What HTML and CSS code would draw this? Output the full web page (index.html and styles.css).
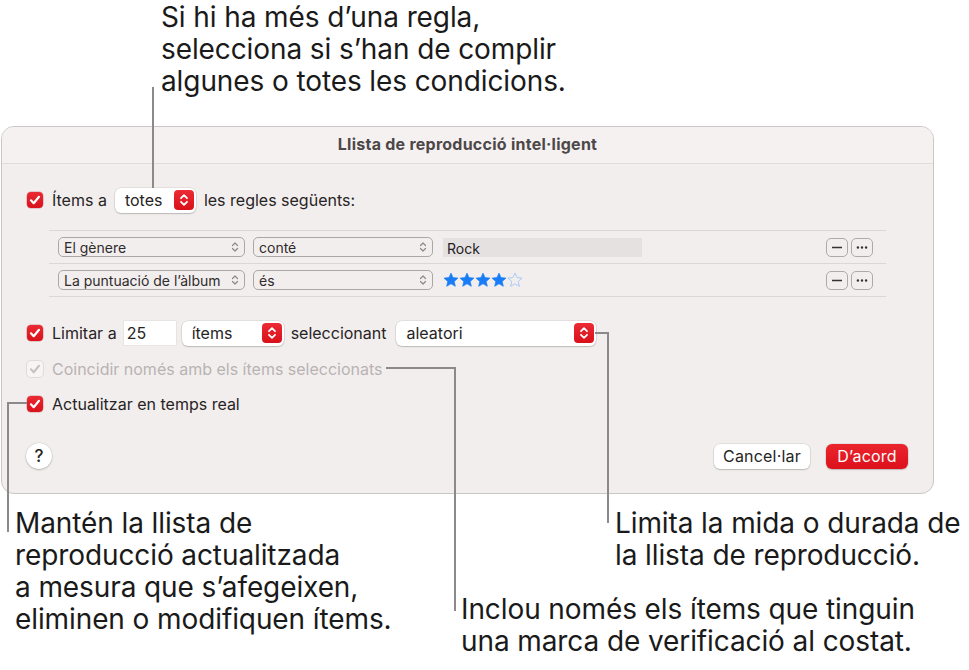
FILE: index.html
```html
<!DOCTYPE html>
<html lang="ca">
<head>
<meta charset="utf-8">
<title>Llista de reproducció intel·ligent</title>
<link rel="stylesheet" href="styles.css">
</head>
<body>
<div class="figure">
  <p class="note note-top">Si hi ha més d’una regla,<br>selecciona si s’han de complir<br>algunes o totes les condicions.</p>

  <div class="dialog">
    <div class="titlebar">Llista de reproducció intel·ligent</div>
    <div class="content">
      <div class="row">
        <span class="check on"><svg viewBox="0 0 16 16"><path d="M4 8.3l2.7 2.9L12 4.8"/></svg></span>
        <span class="label">Ítems a</span>
        <span class="popup popup-totes"><span class="popup-text">totes</span><span class="stepper"><svg viewBox="0 0 20 20"><path d="M7 8.2l3-3 3 3M7 11.8l3 3 3-3"/></svg></span></span>
        <span class="label">les regles següents:</span>
      </div>

      <div class="rules">
        <div class="rule">
          <span class="rpop rpop-a"><span>El gènere</span><svg viewBox="0 0 10 16"><path d="M2.5 6.5L5 4l2.5 2.5M2.5 9.5L5 12l2.5-2.5"/></svg></span>
          <span class="rpop rpop-b"><span>conté</span><svg viewBox="0 0 10 16"><path d="M2.5 6.5L5 4l2.5 2.5M2.5 9.5L5 12l2.5-2.5"/></svg></span>
          <span class="field">Rock</span>
          <span class="spacer"></span>
          <span class="sbtn"><svg viewBox="0 0 22 18"><path d="M5.5 9h11"/></svg></span>
          <span class="sbtn"><svg viewBox="0 0 22 18"><circle cx="6.5" cy="9" r="1.3"/><circle cx="11" cy="9" r="1.3"/><circle cx="15.5" cy="9" r="1.3"/></svg></span>
        </div>
        <div class="rule">
          <span class="rpop rpop-a"><span>La puntuació de l’àlbum</span><svg viewBox="0 0 10 16"><path d="M2.5 6.5L5 4l2.5 2.5M2.5 9.5L5 12l2.5-2.5"/></svg></span>
          <span class="rpop rpop-b"><span>és</span><svg viewBox="0 0 10 16"><path d="M2.5 6.5L5 4l2.5 2.5M2.5 9.5L5 12l2.5-2.5"/></svg></span>
          <span class="stars">
            <svg class="star" viewBox="0 0 16 16"><path d="M8 1l2.06 4.6 5 .5-3.77 3.35 1.08 4.92L8 11.8l-4.37 2.57 1.08-4.92L.94 6.1l5-.5z"/></svg>
            <svg class="star" viewBox="0 0 16 16"><path d="M8 1l2.06 4.6 5 .5-3.77 3.35 1.08 4.92L8 11.8l-4.37 2.57 1.08-4.92L.94 6.1l5-.5z"/></svg>
            <svg class="star" viewBox="0 0 16 16"><path d="M8 1l2.06 4.6 5 .5-3.77 3.35 1.08 4.92L8 11.8l-4.37 2.57 1.08-4.92L.94 6.1l5-.5z"/></svg>
            <svg class="star" viewBox="0 0 16 16"><path d="M8 1l2.06 4.6 5 .5-3.77 3.35 1.08 4.92L8 11.8l-4.37 2.57 1.08-4.92L.94 6.1l5-.5z"/></svg>
            <svg class="star empty" viewBox="0 0 16 16"><path d="M8 1l2.06 4.6 5 .5-3.77 3.35 1.08 4.92L8 11.8l-4.37 2.57 1.08-4.92L.94 6.1l5-.5z"/></svg>
          </span>
          <span class="spacer"></span>
          <span class="sbtn"><svg viewBox="0 0 22 18"><path d="M5.5 9h11"/></svg></span>
          <span class="sbtn"><svg viewBox="0 0 22 18"><circle cx="6.5" cy="9" r="1.3"/><circle cx="11" cy="9" r="1.3"/><circle cx="15.5" cy="9" r="1.3"/></svg></span>
        </div>
      </div>

      <div class="row row-limit">
        <span class="check on"><svg viewBox="0 0 16 16"><path d="M4 8.3l2.7 2.9L12 4.8"/></svg></span>
        <span class="label">Limitar a</span>
        <span class="input">25</span>
        <span class="popup popup-items"><span class="popup-text">ítems</span><span class="stepper"><svg viewBox="0 0 20 20"><path d="M7 8.2l3-3 3 3M7 11.8l3 3 3-3"/></svg></span></span>
        <span class="label">seleccionant</span>
        <span class="popup popup-sel"><span class="popup-text">aleatori</span><span class="stepper"><svg viewBox="0 0 20 20"><path d="M7 8.2l3-3 3 3M7 11.8l3 3 3-3"/></svg></span></span>
      </div>

      <div class="row row-match">
        <span class="check off"><svg viewBox="0 0 16 16"><path d="M4 8.3l2.7 2.9L12 4.8"/></svg></span>
        <span class="label disabled">Coincidir només amb els ítems seleccionats</span>
      </div>

      <div class="row row-live">
        <span class="check on"><svg viewBox="0 0 16 16"><path d="M4 8.3l2.7 2.9L12 4.8"/></svg></span>
        <span class="label">Actualitzar en temps real</span>
      </div>

      <div class="footer">
        <span class="help">?</span>
        <span class="spacer"></span>
        <span class="btn">Cancel·lar</span>
        <span class="btn btn-primary">D’acord</span>
      </div>
    </div>
  </div>

  <div class="notes-bottom">
    <p class="note note-live">Mantén la llista de<br>reproducció actualitzada<br>a mesura que s’afegeixen,<br>eliminen o modifiquen ítems.</p>
    <div class="notes-right">
      <p class="note note-limit">Limita la mida o durada de<br>la llista de reproducció.</p>
      <p class="note note-match">Inclou només els ítems que tinguin<br>una marca de verificació al costat.</p>
    </div>
  </div>

  <svg class="leaders" viewBox="0 0 969 670" width="969" height="670">
    <path d="M153 87V188"/>
    <path d="M595 333H608V523"/>
    <path d="M386 368H455V611"/>
    <path d="M27 403H8V532"/>
  </svg>
</div>
</body>
</html>
```

FILE: styles.css
```css
* { box-sizing: border-box; }

html, body {
  margin: 0;
  padding: 0;
  background: #ffffff;
}

body {
  font-family: Inter, "Noto Sans", "Liberation Sans", sans-serif;
  font-feature-settings: "locl" 0, "calt" 0;
  color: #1d1d1d;
}

.figure {
  position: relative;
  width: 969px;
  height: 670px;
  overflow: hidden;
}

/* Callout notes */
.note {
  margin: 0;
  font-size: 28px;
  line-height: 32px;
  color: #1a1a1a;
  letter-spacing: -0.1px;
  white-space: nowrap;
}

.note-top {
  padding: 1px 0 0 161px;
}

.notes-bottom {
  display: flex;
  margin-top: 13px;
  padding-left: 15px;
}

.note-live {
  width: 446px;
}

.notes-right {
  display: flex;
  flex-direction: column;
}

.note-limit {
  margin-left: 154px;
}

.note-match {
  margin-top: 22px;
}

/* Leader lines */
.leaders {
  position: absolute;
  left: 0;
  top: 0;
  pointer-events: none;
}

.leaders path {
  fill: none;
  stroke: #8a8a8a;
  stroke-width: 2;
}

/* Dialog */
.dialog {
  margin: 29px 0 0 1px;
  width: 933px;
  border: 1px solid #cbc6c6;
  border-radius: 13px;
  background: #f3eeee;
  overflow: hidden;
}

.titlebar {
  height: 37px;
  border-bottom: 1px solid #e1dbdb;
  background: #f5f1f1;
  text-align: center;
  font-size: 16px;
  font-weight: 700;
  letter-spacing: 0.25px;
  line-height: 34px;
  color: #4c4848;
}

.content {
  padding: 24px 25px 24px 25px;
  font-size: 16px;
  color: #262424;
}

.row {
  display: flex;
  align-items: center;
  height: 24px;
}

.label {
  white-space: nowrap;
}

.label.disabled {
  color: #b8b3b3;
}

/* Checkbox */
.check {
  flex: none;
  width: 16px;
  height: 16px;
  border-radius: 4px;
  margin-right: 9px;
  display: flex;
}

.check svg {
  width: 16px;
  height: 16px;
}

.check path {
  fill: none;
  stroke-width: 2.2;
  stroke-linecap: round;
  stroke-linejoin: round;
}

.check.on {
  background: linear-gradient(#ea2a33, #d9111b);
  box-shadow: 0 0 0 0.5px rgba(150, 0, 0, 0.35);
}

.check.on path { stroke: #ffffff; }

.check.off {
  background: #f7f4f4;
  box-shadow: 0 0 0 1px #e0dbdb;
}

.check.off path { stroke: #c8c3c3; }

/* Red stepper popup */
.popup {
  flex: none;
  display: flex;
  align-items: center;
  height: 25px;
  background: #ffffff;
  border-radius: 6px;
  box-shadow: 0 0 0 0.5px rgba(0, 0, 0, 0.12), 0 1px 1.5px rgba(0, 0, 0, 0.18);
  padding: 0 2px 0 10px;
}

.popup-text {
  flex: 1;
  white-space: nowrap;
}

.stepper {
  flex: none;
  width: 20px;
  height: 20px;
  border-radius: 4px;
  background: linear-gradient(#ec2b34, #d8101a);
  display: flex;
}

.stepper svg {
  width: 20px;
  height: 20px;
}

.stepper path {
  fill: none;
  stroke: #ffffff;
  stroke-width: 1.8;
  stroke-linecap: round;
  stroke-linejoin: round;
}

.popup-totes {
  width: 81px;
  margin: 0 8px 0 8px;
}

.popup-items {
  width: 102px;
  margin: 0 7px 0 6px;
}

.popup-sel {
  width: 200px;
  margin-left: 10px;
}

.input {
  flex: none;
  width: 52px;
  height: 24px;
  background: #ffffff;
  box-shadow: 0 0 0 0.5px rgba(0, 0, 0, 0.08);
  padding-left: 3px;
  line-height: 24px;
  margin-left: 7px;
}

/* Rules list */
.rules {
  margin: 18px 22px 0 22px;
  border-top: 1px solid #dcd6d6;
}

.rule {
  display: flex;
  align-items: center;
  height: 33px;
  border-bottom: 1px solid #dcd6d6;
  padding: 0 13px 0 9px;
  font-size: 14px;
  color: #2e2c2c;
}

.rpop {
  flex: none;
  display: flex;
  align-items: center;
  height: 20px;
  border: 1px solid #aca7a7;
  border-radius: 5px;
  padding: 0 4px 0 5px;
  white-space: nowrap;
}

.rpop span {
  flex: 1;
}

.rpop svg {
  width: 10px;
  height: 16px;
}

.rpop path {
  fill: none;
  stroke: #8c8888;
  stroke-width: 1.2;
  stroke-linecap: round;
  stroke-linejoin: round;
}

.rpop-a { width: 187px; }
.rpop-b { width: 180px; margin-left: 8px; }

.field {
  flex: none;
  width: 199px;
  height: 19px;
  margin-left: 10px;
  background: #e6e1e1;
  padding-left: 4px;
  line-height: 21px;
  color: #222;
}

.stars {
  display: flex;
  margin-left: 10px;
}

.star {
  width: 16px;
  height: 16px;
}

.star path {
  fill: #1a7cf6;
  stroke: #1a7cf6;
  stroke-width: 0.6;
  stroke-linejoin: round;
}

.star.empty path {
  fill: none;
  stroke: #a9cbf6;
  stroke-width: 1;
}

.spacer {
  flex: 1;
}

.sbtn {
  flex: none;
  width: 22px;
  height: 19px;
  border: 1px solid #adaaaa;
  border-radius: 5px;
  margin-left: 3px;
  display: flex;
}

.sbtn svg {
  width: 20px;
  height: 17px;
}

.sbtn path {
  stroke: #333;
  stroke-width: 1.6;
}

.sbtn circle {
  fill: #333;
}

/* Lower rows */
.row-limit { margin-top: 24px; }
.row-match { margin-top: 12px; }
.row-live { margin-top: 11px; }

/* Footer */
.footer {
  display: flex;
  align-items: center;
  height: 26px;
  margin-top: 27px;
}

.help {
  flex: none;
  width: 26px;
  height: 26px;
  margin-left: -1px;
  border-radius: 50%;
  background: #ffffff;
  box-shadow: 0 0 0 0.5px rgba(0, 0, 0, 0.12), 0 1px 2px rgba(0, 0, 0, 0.2);
  text-align: center;
  line-height: 26px;
  font-size: 17px;
  font-weight: 500;
  color: #222;
}

.btn {
  flex: none;
  height: 25px;
  border-radius: 6px;
  background: #ffffff;
  box-shadow: 0 0 0 0.5px rgba(0, 0, 0, 0.12), 0 1px 1.5px rgba(0, 0, 0, 0.18);
  width: 96px;
  text-align: center;
  line-height: 25px;
  font-size: 16px;
  letter-spacing: 0.2px;
  color: #262424;
}

.btn-primary {
  width: 82px;
  margin-left: 16px;
  background: linear-gradient(#ea252e, #dc111b);
  color: #ffffff;
}
```
